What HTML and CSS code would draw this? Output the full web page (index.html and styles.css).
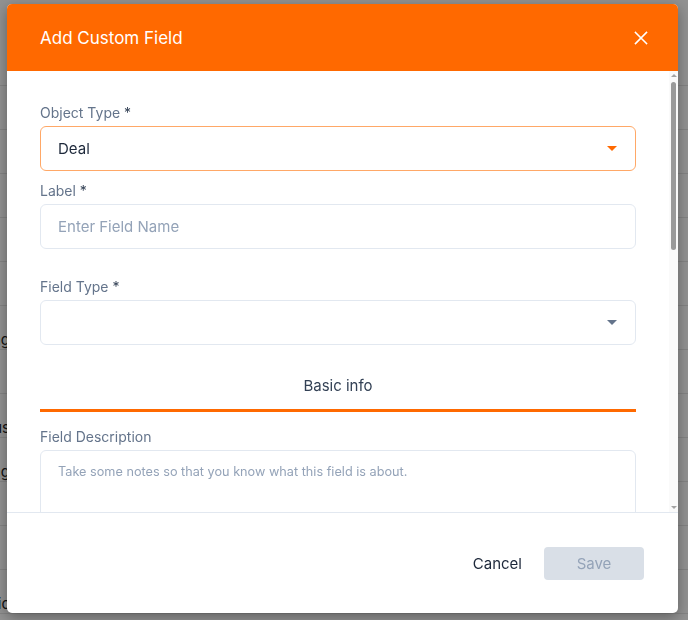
FILE: index.html
```html
<!DOCTYPE html>
<html lang="en">
<head>
<meta charset="utf-8">
<title>Add Custom Field</title>
<link rel="stylesheet" href="styles.css">
</head>
<body>
<div class="page">
  <div class="page-head"></div>
  <div class="row"><div class="c1"></div><div class="c2"></div><div class="c3"></div><div class="c4"></div></div>
  <div class="row"><div class="c1"></div><div class="c2"></div><div class="c3"></div><div class="c4"></div></div>
  <div class="row"><div class="c1"></div><div class="c2"></div><div class="c3"></div><div class="c4"></div></div>
  <div class="row"><div class="c1"></div><div class="c2"></div><div class="c3"></div><div class="c4"></div></div>
  <div class="row"><div class="c1"></div><div class="c2"></div><div class="c3"></div><div class="c4"></div></div>
  <div class="row"><div class="c1"><span>Pricing</span></div><div class="c2"></div><div class="c3"></div><div class="c4"></div></div>
  <div class="row"><div class="c1"></div><div class="c2"></div><div class="c3"></div><div class="c4"></div></div>
  <div class="row"><div class="c1"><span>Status</span></div><div class="c2"></div><div class="c3"></div><div class="c4"></div></div>
  <div class="row"><div class="c1"><span>Tag</span></div><div class="c2"></div><div class="c3"></div><div class="c4"></div></div>
  <div class="row"><div class="c1"></div><div class="c2"></div><div class="c3"></div><div class="c4"></div></div>
  <div class="row"><div class="c1"></div><div class="c2"></div><div class="c3"></div><div class="c4"></div></div>
  <div class="row"><div class="c1"><span>Topic</span></div><div class="c2"></div><div class="c3"></div><div class="c4"></div></div>
</div>

<div class="overlay"></div>

<div class="modal" role="dialog" aria-labelledby="modal-title">
  <div class="modal-header">
    <h2 id="modal-title" class="modal-title">Add Custom Field</h2>
    <button class="close-btn" aria-label="Close">
      <svg width="14" height="14" viewBox="0 0 14 14"><path d="M1.5 1.5 L12.5 12.5 M12.5 1.5 L1.5 12.5" stroke="#fff" stroke-width="1.6" stroke-linecap="square" fill="none"/></svg>
    </button>
  </div>

  <div class="modal-main">
    <div class="modal-body">
      <div class="field">
        <label class="label">Object Type <span class="req">*</span></label>
        <div class="select select-focus">
          <span class="select-value">Deal</span>
          <span class="caret caret-orange"></span>
        </div>
      </div>

      <div class="field field-label">
        <label class="label">Label <span class="req">*</span></label>
        <input class="input" type="text" placeholder="Enter Field Name">
      </div>

      <div class="field field-type">
        <label class="label">Field Type <span class="req">*</span></label>
        <div class="select">
          <span class="select-value"></span>
          <span class="caret"></span>
        </div>
      </div>

      <div class="tabs">
        <div class="tab tab-active">Basic info</div>
      </div>

      <div class="field field-desc">
        <label class="label">Field Description</label>
        <textarea class="textarea" placeholder="Take some notes so that you know what this field is about."></textarea>
      </div>

      <div class="field field-more">
        <label class="label">Placeholder Text</label>
        <input class="input" type="text" placeholder="Enter placeholder text">
      </div>

      <div class="field field-more">
        <label class="label">Help Text</label>
        <input class="input" type="text" placeholder="Enter help text">
      </div>
    </div>

    <div class="scrollbar" aria-hidden="true">
      <span class="sb-arrow sb-up"></span>
      <span class="sb-thumb"></span>
      <span class="sb-spacer"></span>
      <span class="sb-arrow sb-down"></span>
    </div>
  </div>

  <div class="modal-footer">
    <button class="btn btn-cancel">Cancel</button>
    <button class="btn btn-save" disabled>Save</button>
  </div>
</div>
</body>
</html>
```

FILE: styles.css
```css
* { box-sizing: border-box; }

html, body {
  margin: 0;
  padding: 0;
  width: 688px;
  height: 620px;
  overflow: hidden;
  background: #ffffff;
  font-family: Inter, "Noto Sans", "Liberation Sans", sans-serif;
}

/* underlying page (dimmed) */
.page {
  width: 688px;
  height: 620px;
}
.page-head { height: 86px; border-bottom: 1px solid #e6e6e6; }
.row {
  display: flex;
  height: 44px;
  border-bottom: 1px solid #e6e6e6;
  font-size: 15px;
  line-height: 18px;
  color: #222;
}
.c1 {
  width: 10px;
  display: flex;
  justify-content: flex-end;
  align-items: flex-end;
  white-space: nowrap;
}
.c2 { width: 130px; border-right: 1px solid #e6e6e6; }
.c3 { width: 211px; border-right: 1px solid #e6e6e6; }
.c4 { width: 209px; border-right: 1px solid #e6e6e6; }

.overlay {
  position: fixed;
  inset: 0;
  background: rgba(0, 0, 0, 0.43);
}

/* modal */
.modal {
  position: fixed;
  left: 7px;
  top: 4px;
  width: 671px;
  height: 609px;
  background: #ffffff;
  border-radius: 5px;
  overflow: hidden;
  display: flex;
  flex-direction: column;
  box-shadow: 0 4px 14px rgba(0, 0, 0, 0.35);
}

.modal-header {
  height: 67px;
  flex: none;
  background: #ff6900;
  display: flex;
  align-items: center;
  justify-content: space-between;
  padding: 0 27px 0 33px;
}
.modal-title {
  margin: 0;
  font-size: 17px;
  font-weight: 400;
  color: #ffffff;
}
.close-btn {
  width: 20px;
  height: 20px;
  border: 0;
  padding: 0;
  background: transparent;
  display: flex;
  align-items: center;
  justify-content: center;
  cursor: pointer;
}

.modal-main {
  flex: 1;
  min-height: 0;
  display: flex;
}
.modal-body {
  flex: 1;
  overflow: hidden;
  padding: 32px 33px 0 33px;
}

/* scrollbar rail */
.scrollbar {
  width: 9px;
  flex: none;
  background: #fafafa;
  display: flex;
  flex-direction: column;
  align-items: center;
  padding: 3px 0 3px;
}
.sb-arrow {
  width: 0;
  height: 0;
  border-left: 3px solid transparent;
  border-right: 3px solid transparent;
}
.sb-up { border-bottom: 3px solid #a3a3a3; }
.sb-down { border-top: 3px solid #a3a3a3; }
.sb-thumb {
  width: 5px;
  height: 168px;
  margin-top: 5px;
  background: #9a9a9a;
  border-radius: 3px;
}
.sb-spacer { flex: 1; }

.field {
  display: flex;
  flex-direction: column;
  gap: 3px;
}
.field-label { margin-top: 10px; }
.field-type { margin-top: 28px; }
.field-desc { margin-top: 15px; }
.field-more { margin-top: 24px; }

.label {
  font-size: 14px;
  line-height: 20px;
  color: #64748b;
}
.req { color: #334155; }

.select, .input, .textarea {
  width: 596px;
  height: 45px;
  border: 1px solid #e2e8f0;
  border-radius: 6px;
  background: #ffffff;
  font-family: inherit;
}
.select {
  display: flex;
  align-items: center;
  justify-content: space-between;
  padding: 0 18px 0 17px;
}
.select-focus { border-color: #ffa867; }
.select-value {
  font-size: 15px;
  color: #1e293b;
}
.caret {
  width: 0;
  height: 0;
  border-left: 5px solid transparent;
  border-right: 5px solid transparent;
  border-top: 5px solid #64748b;
}
.caret-orange { border-top-color: #ff6900; }

.input {
  padding: 0 17px;
  font-size: 15px;
  color: #1e293b;
  outline: none;
}
.input::placeholder { color: #94a3b8; }

.textarea {
  height: 110px;
  padding: 11px 17px;
  font-size: 12.7px;
  line-height: 20px;
  resize: none;
  outline: none;
  display: block;
}
.textarea::placeholder { color: #94a3b8; }

.tabs {
  margin-top: 30px;
  display: flex;
}
.tab {
  flex: 1;
  text-align: center;
  font-size: 15px;
  line-height: 22px;
  color: #334155;
  padding-bottom: 12px;
}
.tab-active { border-bottom: 3px solid #ff6900; }

.modal-footer {
  height: 101px;
  flex: none;
  border-top: 1px solid #e2e8f0;
  display: flex;
  align-items: center;
  justify-content: flex-end;
  gap: 10px;
  padding-right: 34px;
}
.btn {
  font-family: inherit;
  font-size: 15px;
  border: 0;
  border-radius: 4px;
  height: 33px;
  cursor: pointer;
}
.btn-cancel {
  background: transparent;
  color: #1e293b;
  padding: 0 12px;
}
.btn-save {
  width: 100px;
  background: #d9dfe7;
  color: #94a3b8;
}
```
